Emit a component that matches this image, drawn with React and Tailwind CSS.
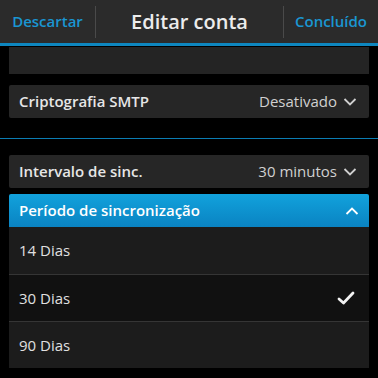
import React from 'react';

function Chevron({ up = false }) {
  return (
    <svg width="14" height="10" viewBox="0 0 14 10" className="ml-[6px]">
      <path
        d={up ? 'M1.5 8 L7 2.5 L12.5 8' : 'M1.5 2 L7 7.5 L12.5 2'}
        fill="none"
        stroke="currentColor"
        strokeWidth="1.8"
      />
    </svg>
  );
}

function Check() {
  return (
    <svg width="18" height="16" viewBox="0 0 18 16">
      <path d="M2 9 L6.5 13 L16 3" fill="none" stroke="#f2f2f2" strokeWidth="2.8" strokeLinecap="round" strokeLinejoin="round" />
    </svg>
  );
}

function Dropdown({ label, value }) {
  return (
    <div className="mx-[9px] h-[33px] bg-[#262626] rounded-[2px] flex items-center justify-between pl-[10px] pr-[12px]">
      <span className="text-[15px] font-semibold text-[#e6e6e6]">{label}</span>
      <span className="flex items-center text-[15px] text-[#d0d0d0]">
        {value}
        <Chevron />
      </span>
    </div>
  );
}

export default function App() {
  const options = [
    { label: '14 Dias', selected: false },
    { label: '30 Dias', selected: true },
    { label: '90 Dias', selected: false },
  ];

  return (
    <div className="w-[378px] h-[378px] bg-black overflow-hidden" style={{ fontFamily: '"Open Sans", "Noto Sans", sans-serif' }}>
      {/* Header */}
      <div className="h-[43px] bg-[#2b2b2b] flex items-center">
        <div className="w-[95px] flex justify-center">
          <span className="text-[15px] font-semibold text-[#1a96d2]">Descartar</span>
        </div>
        <div className="w-px h-[32px] bg-[#4a4a4a]" />
        <div className="flex-1 flex justify-center">
          <span className="text-[20px] font-semibold text-[#ececec]">Editar conta</span>
        </div>
        <div className="w-px h-[32px] bg-[#4a4a4a]" />
        <div className="w-[94px] flex justify-center">
          <span className="text-[15px] font-semibold text-[#1a96d2]">Concluído</span>
        </div>
      </div>
      <div className="h-[3px] bg-[#0e86bf]" />

      <div className="mx-[9px] h-[27px] bg-[#242424] mt-[1px]" />

      <div className="mt-[11px]">
        <Dropdown label="Criptografia SMTP" value="Desativado" />
      </div>

      <div className="mt-[20px] h-px bg-[#0b7db3]" />

      <div className="mt-[16px]">
        <Dropdown label="Intervalo de sinc." value="30 minutos" />
      </div>

      <div className="mx-[9px] mt-[6px]">
        <div className="h-[33px] rounded-t-[2px] bg-gradient-to-b from-[#12a2dc] to-[#0a83c2] flex items-center justify-between pl-[10px] pr-[10px] text-white">
          <span className="text-[15px] font-semibold">Período de sincronização</span>
          <Chevron up />
        </div>
        {options.map((o, i) => (
          <div
            key={o.label}
            className={
              'h-[47px] flex items-center justify-between pl-[10px] pr-[14px] ' +
              (o.selected ? 'bg-[#111111] ' : 'bg-[#1c1c1c] ') +
              (i > 0 ? 'border-t border-[#353535]' : '')
            }
          >
            <span className="text-[15px] text-[#e0e0e0]">{o.label}</span>
            {o.selected && <Check />}
          </div>
        ))}
      </div>
    </div>
  );
}
